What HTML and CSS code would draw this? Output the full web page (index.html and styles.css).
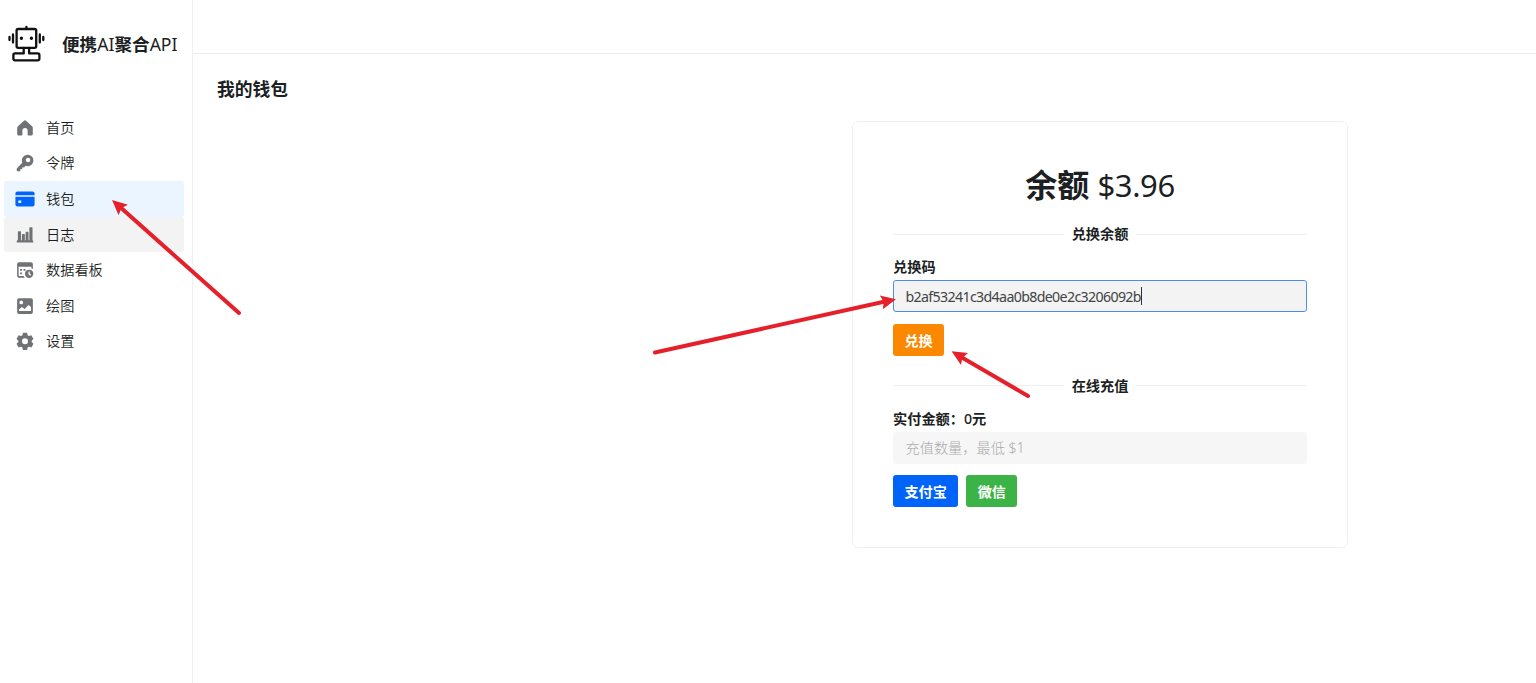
FILE: index.html
```html
<!DOCTYPE html>
<html lang="zh-CN">
<head>
    <meta charset="UTF-8">
    <meta name="viewport" content="width=device-width, initial-scale=1.0">
    <title>便携AI聚合API</title>
    <link rel="stylesheet" href="styles.css">
</head>
<body>

<div class="layout">
    <aside class="sidebar">
        <div class="logo">
            <svg class="logo-icon" width="38" height="38" viewBox="0 0 38 38" fill="none" stroke="#111" stroke-width="2.3" stroke-linecap="round" stroke-linejoin="round">
                <rect x="9.6" y="4" width="19.6" height="18.8" rx="1.6"/>
                <path d="M19.400 1.800v2M6 9.500v8M32.800 9.500v8M2.500 12v3M36.300 12v3"/>
                <path d="M16.700 23v5.400H8a1.600 1.600 0 0 0-1.600 1.600v3.800a1.600 1.600 0 0 0 1.600 1.600h22.800a1.600 1.600 0 0 0 1.600-1.600V30a1.600 1.600 0 0 0-1.600-1.600h-8.700V23"/>
                <circle cx="14.4" cy="13.3" r="0.9" fill="#111" stroke-width="1.6"/>
                <circle cx="24.4" cy="13.3" r="0.9" fill="#111" stroke-width="1.6"/>
            </svg>
            <span class="logo-text">便携<span>AI</span>聚合<span>API</span></span>
        </div>
        <nav class="menu">
            <a class="item">
                <svg class="icon" viewBox="0 0 24 24"><path d="M10.6 2.4a2 2 0 0 1 2.8 0l8 7.4c.6.6 1 1.300 1 2.100V20a2 2 0 0 1-2 2h-3.900a1 1 0 0 1-1-1v-5.500a3.500 3.500 0 0 0-7 0V21a1 1 0 0 1-1 1H3.600a2 2 0 0 1-2-2v-8.100c0-.8.4-1.500 1-2.100z"/></svg>
                <span>首页</span>
            </a>
            <a class="item">
                <svg class="icon" viewBox="0 0 24 24"><path fill-rule="evenodd" d="M15.500 1a7.600 7.600 0 1 1-2.600 14.700l-2.200 2.200-2.200-.2-.3 2.600-2.300-.2-.3 2.900H2a1 1 0 0 1-1-1v-2.800L8.400 11.500A7.600 7.600 0 0 1 15.500 1zm.6 4a3 3 0 1 0 0 6 3 3 0 0 0 0-6z"/></svg>
                <span>令牌</span>
            </a>
            <a class="item selected">
                <svg class="icon" viewBox="0 0 24 24"><path d="M3 3h18a2.500 2.500 0 0 1 2.500 2.500v2H.5v-2A2.500 2.500 0 0 1 3 3z"/><path fill-rule="evenodd" d="M.5 9.200h23v9.300A2.500 2.500 0 0 1 21 21H3a2.500 2.500 0 0 1-2.500-2.500zM4 13.800v3h3.500v-3z"/></svg>
                <span>钱包</span>
            </a>
            <a class="item hover">
                <svg class="icon" viewBox="0 0 24 24"><path d="M2.500 8a1 1 0 0 1 1-1h2.200a1 1 0 0 1 1 1v11.500H2.500zM7.900 11.500a1 1 0 0 1 1-1h1.900a1 1 0 0 1 1 1v8H7.900zM12.800 8.500a1 1 0 0 1 1-1h1.900a1 1 0 0 1 1 1v11h-3.900zM17.800 2.500a1 1 0 0 1 1-1H21a1 1 0 0 1 1 1v17h-4.200zM2 19h20a1 1 0 0 1 1 1v2H1v-2a1 1 0 0 1 1-1z"/></svg>
                <span>日志</span>
            </a>
            <a class="item">
                <svg class="icon" viewBox="0 0 24 24"><path fill-rule="evenodd" d="M4 1.500h16a2.500 2.500 0 0 1 2.500 2.500v6.700l-2-.8V7.500h-17V19a1 1 0 0 0 1 1h5.800l1.200 2.200H4A2.500 2.500 0 0 1 1.500 19.700V4A2.500 2.500 0 0 1 4 1.500z"/><path d="M5.500 10.500h2.600V13H5.500zM10 10.500h2.600V13H10zM5.500 15.200h2.600v2.500H5.500z"/><path fill-rule="evenodd" d="M17.500 11.500a5.600 5.600 0 1 1 0 11.200 5.600 5.600 0 0 1 0-11.200zM16.600 14v3.600l2.600 2.100 1.100-1.300-2-1.600V14z"/></svg>
                <span>数据看板</span>
            </a>
            <a class="item">
                <svg class="icon" viewBox="0 0 24 24"><path fill-rule="evenodd" d="M4 1.500h16A2.500 2.500 0 0 1 22.500 4v16a2.500 2.500 0 0 1-2.500 2.500H4A2.500 2.500 0 0 1 1.500 20V4A2.500 2.500 0 0 1 4 1.500zM7 4.800a2.500 2.500 0 1 0 0 5 2.500 2.500 0 0 0 0-5zM4 18.800h16v-5.600l-3.300-2.600-5.200 5.300-3.800-2.700L4 16.500z"/></svg>
                <span>绘图</span>
            </a>
            <a class="item">
                <svg class="icon" viewBox="0 0 24 24"><path fill-rule="evenodd" d="M9.300 1h5.400l.8 3.300 1.700 1 3.300-.9 2.800 4.800-2.400 2.300v1.900l2.400 2.300-2.800 4.800-3.300-.9-1.700 1-.8 3.300H9.300l-.8-3.300-1.700-1-3.300.9L.7 15.700l2.400-2.300v-1.900L.7 9.200l2.800-4.800 3.300.9 1.700-1zM12 8.300a4 4 0 1 0 0 8 4 4 0 0 0 0-8z"/></svg>
                <span>设置</span>
            </a>
        </nav>
    </aside>

    <div class="main">
        <header class="header"></header>
        <div class="content">
            <h3 class="title">我的钱包</h3>
            <div class="card">
                <h1 class="balance">余额 <span>$3.96</span></h1>

                <div class="divider">兑换余额</div>
                <label class="label">兑换码</label>
                <div class="input focus"><span class="code">b2af53241c3d4aa0b8de0e2c3206092b</span><i class="caret"></i></div>
                <div class="buttons">
                    <button class="btn btn-orange">兑换</button>
                </div>

                <div class="divider">在线充值</div>
                <label class="label">实付金额：<span>0</span>元</label>
                <input type="text" class="input" placeholder="充值数量，最低 $1">
                <div class="buttons">
                    <button class="btn btn-blue">支付宝</button>
                    <button class="btn btn-green">微信</button>
                </div>
            </div>
        </div>
    </div>
</div>

<!-- 操作指引箭头 -->
<svg class="arrows" width="1536" height="683" viewBox="0 0 1536 683">
    <defs>
        <marker id="head" markerUnits="userSpaceOnUse" markerWidth="20" markerHeight="20" refX="6" refY="8" orient="auto">
            <path d="M16 8L1 1l2.500 7L1 15z" fill="#e5202a"/>
        </marker>
    </defs>
    <g stroke="#e5202a" stroke-width="4" stroke-linecap="round">
        <line x1="239" y1="313" x2="119.500" y2="206.600" marker-end="url(#head)"/>
        <line x1="655" y1="352.500" x2="886.200" y2="301.300" marker-end="url(#head)"/>
        <line x1="1028" y1="396" x2="960.200" y2="356.400" marker-end="url(#head)"/>
    </g>
</svg>

</body>
</html>
```

FILE: styles.css
```css
* {
    box-sizing: border-box;
}

body {
    margin: 0;
    font-family: "Noto Sans", "Noto Sans CJK SC", sans-serif;
    font-size: 14.2px;
    color: #1c1f23;
    background-color: #fff;
    overflow: hidden;
}

.layout {
    display: flex;
    height: 100vh;
}

/* Barra lateral */
.sidebar {
    width: 193px;
    flex-shrink: 0;
    border-right: 1px solid #f0f0f0;
}

.logo {
    display: flex;
    align-items: center;
    height: 110px;
    padding: 0 0 22px 7px;
}

.logo-text {
    margin: 0 0 1px 17px;
    font-size: 17.6px;
    font-weight: 600;
    white-space: nowrap;
}

.logo-text span {
    font-weight: 400;
}

.menu {
    padding: 0 8px 0 4px;
}

.item {
    display: flex;
    align-items: center;
    height: 35.6px;
    padding-left: 11px;
    border-radius: 3px;
}

.item span {
    margin: 0 0 2px 11px;
    font-weight: 350;
}

.icon {
    width: 20px;
    height: 20px;
    padding: 1px;
    fill: #707276;
}

.selected {
    background-color: #eaf5ff;
}

.selected .icon {
    padding: 0;
    fill: #0064fa;
}

.hover {
    background-color: #f3f3f3;
}

/* Contenido */
.main {
    flex: 1;
}

.header {
    height: 54px;
    border-bottom: 1px solid #ededed;
}

.content {
    padding: 22px 24px;
}

.title {
    margin: 0;
    font-size: 17.8px;
    line-height: 26px;
    font-weight: 600;
}

.card {
    width: 496px;
    height: 427px;
    margin: 19px 0 0 635px;
    padding: 40px;
    border: 1px solid #f0f0f0;
    border-radius: 6px;
}

.balance {
    margin: 0;
    font-size: 32px;
    line-height: 46px;
    font-weight: 600;
    text-align: center;
}

.balance span {
    font-size: 31px;
    font-weight: 400;
    letter-spacing: -0.4px;
}

.divider {
    display: flex;
    align-items: center;
    height: 20px;
    margin: 16px 0 13px;
    line-height: 20px;
    font-weight: 600;
}

.divider::before,
.divider::after {
    content: "";
    flex: 1;
    height: 1px;
    background-color: #f0f0f0;
}

.divider::before {
    margin-right: 8px;
}

.divider::after {
    margin-left: 8px;
}

.label {
    display: block;
    height: 20px;
    margin-bottom: 3px;
    line-height: 20px;
    font-weight: 600;
}

.label span {
    font-weight: 500;
}

.input {
    display: flex;
    align-items: center;
    width: 100%;
    height: 32px;
    padding: 0 11.5px;
    border: 1px solid transparent;
    border-radius: 3px;
    background-color: #f6f6f6;
    font-family: inherit;
    font-size: 14.2px;
    font-weight: 300;
}

.input::placeholder {
    color: #a9abad;
}

.focus {
    border-color: #4c8cf0;
    background-color: #f3f3f3;
}

.code {
    font-weight: 400;
    color: #414446;
    letter-spacing: -0.65px;
}

.caret {
    width: 1px;
    height: 18px;
    background-color: #333;
}

.buttons {
    display: flex;
    gap: 8px;
    margin-top: 11.5px;
    padding-bottom: 4px;
}

.btn {
    height: 32px;
    padding: 0 11.5px;
    border: none;
    border-radius: 3px;
    color: #fff;
    font-family: inherit;
    font-size: 14.1px;
    font-weight: 600;
}

.btn-orange {
    background-color: #fc8800;
}

.btn-blue {
    background-color: #0064fa;
}

.btn-green {
    background-color: #3bb346;
}

/* Flechas por encima de la página */
.arrows {
    position: absolute;
    top: 0;
    left: 0;
    pointer-events: none;
}
```
